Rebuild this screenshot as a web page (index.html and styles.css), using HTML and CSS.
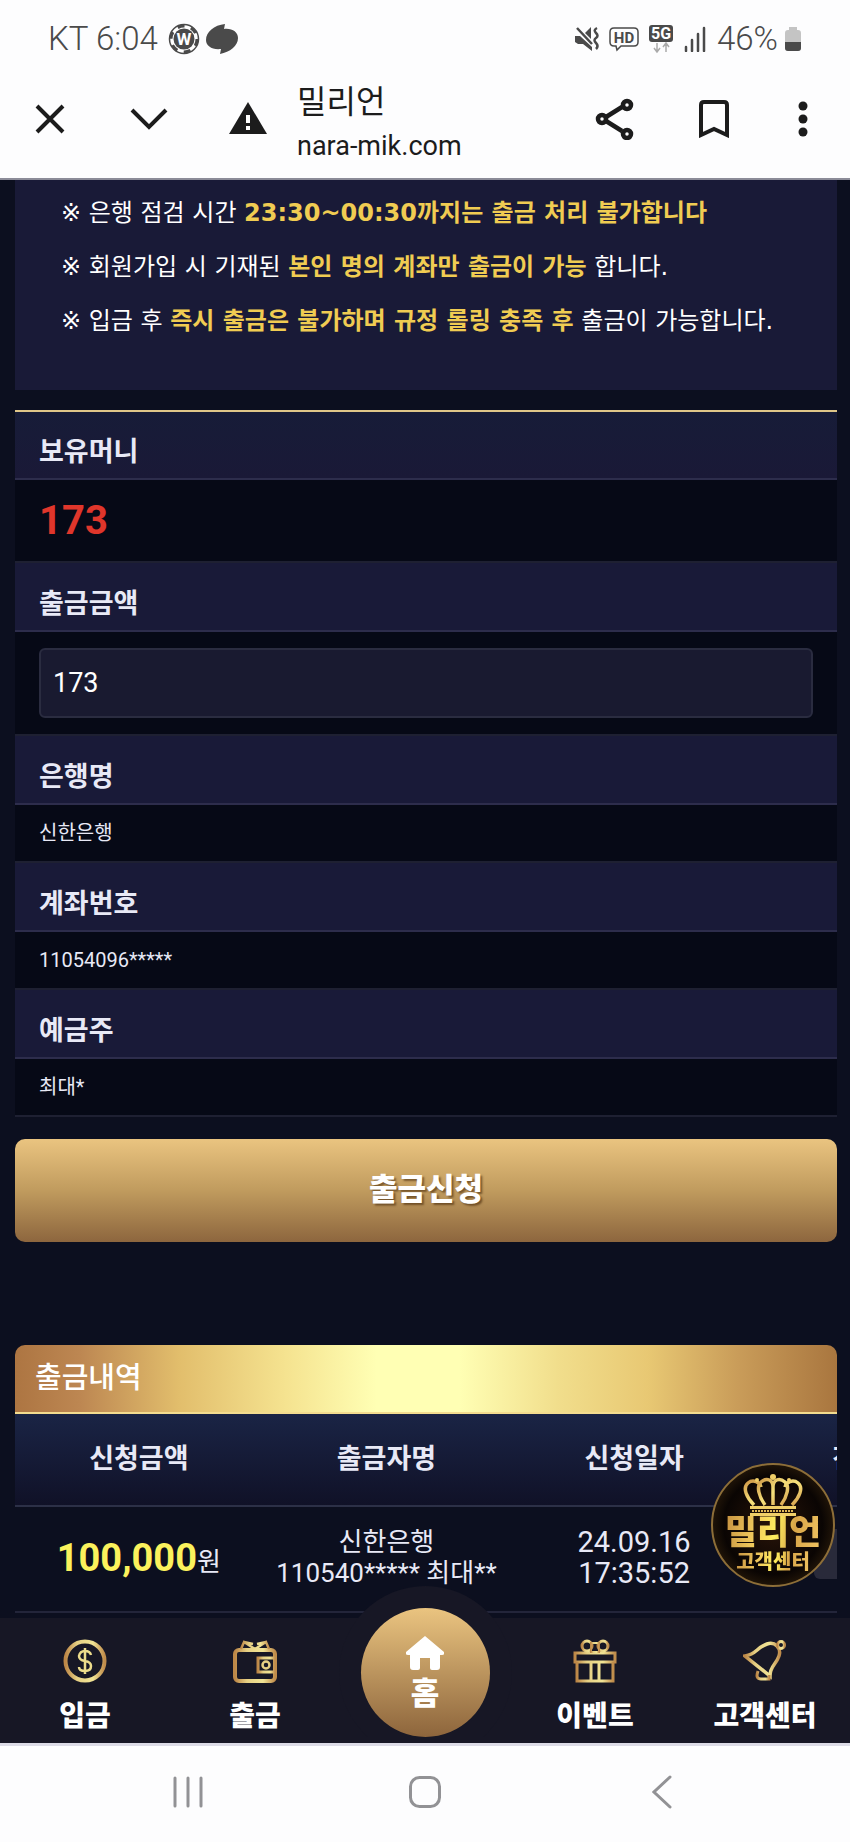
FILE: index.html
```html
<!DOCTYPE html>
<html lang="ko">
<head>
<meta charset="utf-8">
<meta name="viewport" content="width=device-width, initial-scale=1">
<title>밀리언</title>
<link rel="stylesheet" href="styles.css">
</head>
<body>
<div class="screen">
  <div class="status">
    <div class="status-left">
      <span>KT 6:04</span>
      <svg width="32" height="32" viewBox="0 0 32 32" aria-hidden="true">
        <circle cx="16" cy="16" r="14.500" fill="#fff" stroke="#4a4a4a" stroke-width="1.500"/>
        <circle cx="16" cy="16" r="13" fill="none" stroke="#4a4a4a" stroke-width="3" stroke-dasharray="7 6.610"/>
        <circle cx="16" cy="16" r="10.500" fill="#4a4a4a"/>
        <text x="16" y="22" class="coin-letter">W</text>
      </svg>
      <svg width="32" height="32" viewBox="0 0 32 32" aria-hidden="true"><path d="M19 1 18 6C26 5 32 9 32 15c0 8-8 14-18 16l1-5C6 27 0 23 0 17 0 9 8 2 19 1z" fill="#4a4a4a"/></svg>
    </div>
    <div class="status-right">
      <svg width="24" height="26" viewBox="0 0 24 26" aria-hidden="true"><g fill="#4a4a4a"><path d="M0 10h5l12 11v4L8 18H3L0 16z"/><path d="M10 7l6-6v12z"/></g><path d="M2 2l15 16M22 2q-4 2-1 5t0 5 0 5 0 6" fill="none" stroke="#4a4a4a" stroke-width="2.500"/></svg>
      <svg width="30" height="26" viewBox="0 0 30 26" aria-hidden="true"><path d="M5 2h20q4 0 4 4v10q0 4-4 4H12l-4 4-1-4H5q-4 0-4-4V6q0-4 4-4z" fill="none" stroke="#4a4a4a" stroke-width="1.500"/><text x="15" y="17" class="hd">HD</text></svg>
      <svg width="24" height="30" viewBox="0 0 24 30" aria-hidden="true"><rect width="24" height="17" y="1" rx="3" fill="#4a4a4a"/><text x="12" y="15" class="five-g">5G</text><path d="M8 19v8m-3-3 3 4 3-4M17 28v-8m-3 3 3-4 3 4" fill="none" stroke="#aaa" stroke-width="1.500"/></svg>
      <svg width="24" height="26" viewBox="0 0 24 26" aria-hidden="true"><path d="M3 21v4M9 14v11M15 8v17M21 2v23" stroke="#4a4a4a" stroke-width="2.500" stroke-linecap="round"/></svg>
      <div class="battery">
        <span>46%</span>
        <svg width="18" height="26" viewBox="0 0 18 26" aria-hidden="true"><path d="M5 1h8v3h1q3 0 3 3v15q0 3-3 3H4q-3 0-3-3V7q0-3 3-3h1z" fill="#c4c4c4"/><path d="M1 16h16v6q0 3-3 3H4q-3 0-3-3z" fill="#4a4a4a"/></svg>
      </div>
    </div>
  </div>

  <header class="toolbar">
    <button class="tool" aria-label="닫기"><svg width="30" height="30" viewBox="0 0 30 30"><path d="M2 2l26 26M28 2 2 28" stroke="#1c1c1c" stroke-width="4"/></svg></button>
    <button class="tool" aria-label="접기"><svg width="38" height="24" viewBox="0 0 38 24"><path d="M2 3l17 17L36 3" fill="none" stroke="#1c1c1c" stroke-width="4"/></svg></button>
    <button class="tool" aria-label="사이트 정보"><svg width="38" height="34" viewBox="0 0 38 34"><path d="M19 0 38 32H0z" fill="#1c1c1c"/><path d="M17 13h4v8h-4zM17 24h4v4h-4z" fill="#fff"/></svg></button>
    <div class="site">
      <div class="site-name">밀리언</div>
      <div class="site-url">nara-mik.com</div>
    </div>
    <button class="tool" aria-label="공유"><svg width="40" height="42" viewBox="0 0 40 42"><g fill="none" stroke="#1c1c1c" stroke-width="4.500"><path d="M11 19 27 9M11 23l16 10"/><circle cx="7" cy="21" r="4"/><circle cx="32" cy="7" r="4"/><circle cx="32" cy="36" r="4"/></g></svg></button>
    <button class="tool" aria-label="북마크"><svg width="30" height="38" viewBox="0 0 30 38"><path d="M2 35V5q0-3 3-3h20q3 0 3 3v30L15 29z" fill="none" stroke="#1c1c1c" stroke-width="4"/></svg></button>
    <button class="tool tool-narrow" aria-label="더보기"><svg width="10" height="36" viewBox="0 0 10 36"><g fill="#1c1c1c"><circle cx="5" cy="5" r="4.500"/><circle cx="5" cy="18" r="4.500"/><circle cx="5" cy="31" r="4.500"/></g></svg></button>
  </header>

  <main class="page">
    <section class="notice">
      <p>※ 은행 점검 시간 <b>23:30~00:30까지는 출금 처리 불가합니다</b></p>
      <p>※ 회원가입 시 기재된 <b>본인 명의 계좌만 출금이 가능</b> 합니다.</p>
      <p>※ 입금 후 <b>즉시 출금은 불가하며 규정 롤링 충족 후</b> 출금이 가능합니다.</p>
    </section>

    <form class="withdraw">
      <dl class="fields">
        <dt>보유머니</dt>
        <dd class="balance">173</dd>
        <dt><label for="amount">출금금액</label></dt>
        <dd class="entry"><input id="amount" type="text" value="173"></dd>
        <dt>은행명</dt>
        <dd>신한은행</dd>
        <dt>계좌번호</dt>
        <dd>11054096*****</dd>
        <dt>예금주</dt>
        <dd>최대*</dd>
      </dl>
      <button class="submit" type="button">출금신청</button>
    </form>

    <section class="history">
      <h2>출금내역</h2>
      <table>
        <thead><tr><th>신청금액</th><th>출금자명</th><th>신청일자</th><th>진행상태</th></tr></thead>
        <tbody><tr>
          <td class="paid"><span class="sum">100,000</span><span class="won">원</span></td>
          <td>신한은행<br>110540***** 최대**</td>
          <td class="date">24.09.16<br>17:35:52</td>
          <td><span class="state"></span></td>
        </tr></tbody>
      </table>
    </section>

    <a class="support" href="#support">
      <svg width="60" height="42" viewBox="0 0 60 42" aria-hidden="true">
        <defs><linearGradient id="gold" x1="0" y1="0" x2="1" y2="1"><stop offset="0" stop-color="#d09a48"/><stop offset=".5" stop-color="#f7e27c"/><stop offset="1" stop-color="#d6a04c"/></linearGradient></defs>
        <g fill="none" stroke="url(#gold)" stroke-width="3.500"><path d="M11 31C4 24-1 14 5 9c5-4 12-1 13 4M49 31c7-7 12-17 6-22-5-4-12-1-13 4"/><path d="M22 31c-6-8-9-19-4-23 6-5 12-2 12 5 0-7 6-10 12-5 5 4 2 15-4 23M30 8v23"/></g>
        <g fill="#f0cf68"><circle cx="30" cy="3" r="3"/><circle cx="14" cy="6" r="2"/><circle cx="46" cy="6" r="2"/><path d="M7 32h46v3H7zM7 39h46v3H7z"/></g>
        <path d="M9 37h42" stroke="#e0b856" stroke-width="2" stroke-dasharray="2 1"/>
      </svg>
      <span class="support-name">밀리언</span>
      <span class="support-label">고객센터</span>
    </a>
  </main>

  <nav class="tabs">
    <a class="tab" href="#deposit">
      <svg width="44" height="44" viewBox="0 0 44 44" aria-hidden="true">
        <defs><linearGradient id="line" x1="0" y1="0" x2="1" y2="0"><stop offset="0" stop-color="#bd8747"/><stop offset=".3" stop-color="#e6d084"/><stop offset=".7" stop-color="#f1e495"/><stop offset="1" stop-color="#c08c4b"/></linearGradient></defs>
        <circle cx="22" cy="22" r="19.500" fill="none" stroke="url(#line)" stroke-width="4"/>
        <path d="M28 16q-1-4-6-4t-6 5q0 4 6 5t6 5q0 5-6 5t-6-4M22 9v26" fill="none" stroke="#ecdc8c" stroke-width="2.500"/>
      </svg>
      <span>입금</span>
    </a>
    <a class="tab" href="#withdraw">
      <svg width="44" height="44" viewBox="0 0 44 44" aria-hidden="true"><g fill="none" stroke="url(#line)" stroke-width="3"><rect x="2" y="11" width="40" height="31" rx="4" stroke-width="4"/><path d="M8 10l3-7 11 7 11-7 3 7M11 3l9 2M33 3l-9 2" stroke-width="2.500"/><path d="M42 19H25v14h17"/><circle cx="33" cy="26" r="3.500" stroke="#e6d084" stroke-width="2.500"/></g></svg>
      <span>출금</span>
    </a>
    <a class="tab tab-home" href="#home">
      <span class="home-disc">
        <svg width="38" height="34" viewBox="0 0 38 34" aria-hidden="true"><path d="M19 0 38 16q1 3-2 3h-2v12q0 3-3 3h-5q-2 0-2-2V22H14v10q0 2-2 2H7q-3 0-3-3V19H2q-3 0-2-3z" fill="#fff"/></svg>
        <span>홈</span>
      </span>
    </a>
    <a class="tab" href="#event">
      <svg width="44" height="44" viewBox="0 0 44 44" aria-hidden="true"><g fill="none" stroke="url(#line)" stroke-width="3"><rect x="2" y="14" width="40" height="9"/><path d="M4 23v19h36V23M18 23v19M26 23v19"/><circle cx="14" cy="7" r="5"/><circle cx="30" cy="7" r="5"/><path d="M18 4h8v9h-8z" stroke-width="2"/></g></svg>
      <span>이벤트</span>
    </a>
    <a class="tab" href="#help">
      <svg width="44" height="44" viewBox="0 0 44 44" aria-hidden="true"><g fill="none" stroke="url(#line)" stroke-width="3.500"><path d="M2 17C14 15 13 9 24 5q6-2 10 2 4 4 2 10c-3 9-9 10-9 20z"/><circle cx="38" cy="6" r="3.500" stroke-width="3"/><path d="M15 32q-3 8 3 8h8v-4" stroke-width="3"/></g></svg>
      <span>고객센터</span>
    </a>
  </nav>

  <div class="system">
    <button aria-label="최근 앱"><svg width="32" height="32" viewBox="0 0 32 32"><path d="M3 2v28M16 2v28M29 2v28" stroke="#929295" stroke-width="3" stroke-linecap="round"/></svg></button>
    <button aria-label="홈 화면"><svg width="32" height="32" viewBox="0 0 32 32"><rect x="1.500" y="1.500" width="29" height="29" rx="9" fill="none" stroke="#929295" stroke-width="3"/></svg></button>
    <button aria-label="뒤로"><svg width="20" height="34" viewBox="0 0 20 34"><path d="M18 2 2 17l16 15" fill="none" stroke="#929295" stroke-width="3" stroke-linecap="round"/></svg></button>
  </div>
</div>
</body>
</html>
```
FILE: styles.css
```css
* { box-sizing: border-box; }

body {
  margin: 0;
  background: #fdfdfe;
  font-family: Roboto, "Noto Sans CJK KR", sans-serif;
  color: #e8e9f6;
}

button {
  padding: 0;
  border: 0;
  background: none;
  font-family: inherit;
  cursor: pointer;
}

a { color: inherit; text-decoration: none; }
svg { display: block; flex: none; }

.screen {
  display: flex;
  flex-direction: column;
  min-height: 100vh;
}

/* phone status bar */
.status {
  display: flex;
  justify-content: space-between;
  align-items: center;
  height: 60px;
  padding: 18px 48px 0 48px;
  font-size: 33px;
  font-weight: 300;
  line-height: 42px;
  color: #4a4a4a;
}
.status-left { display: flex; align-items: center; gap: 6px; }
.status-left span { margin-right: 4px; }
.status-right { display: flex; align-items: center; gap: 10px; }
.battery { display: flex; align-items: center; gap: 6px; }
.coin-letter { font: 700 17px Roboto, sans-serif; fill: #fff; text-anchor: middle; }
.hd { font: 700 15px Roboto, sans-serif; fill: #4a4a4a; text-anchor: middle; }
.five-g { font: 700 16px Roboto, sans-serif; fill: #fff; text-anchor: middle; }

/* browser toolbar */
.toolbar {
  display: flex;
  align-items: center;
  height: 120px;
  padding-right: 8px;
  border-bottom: 2px solid #8b8b98;
  color: #1c1c1c;
}
.tool {
  display: flex;
  justify-content: center;
  align-items: center;
  width: 99px;
  height: 99px;
}
.tool-narrow { width: 79px; }
.site { flex: 1; min-width: 0; padding-top: 9px; }
.site-name { font-size: 32px; line-height: 44px; }
.site-url { font-size: 27px; line-height: 44px; }

/* page */
.page {
  position: relative;
  flex: 1;
  padding: 0 13px 5px 15px;
  overflow: hidden;
  background: #0c0f1f;
}
.notice {
  padding: 6px 46px 42px;
  background: #191a37;
  font-family: "DejaVu Sans", "Noto Sans CJK KR", sans-serif;
  font-size: 24px;
  line-height: 54px;
  color: #fff;
}
.notice p { margin: 0; }
.notice b { color: #f0cc52; }

.fields {
  margin: 20px 0 0;
  border-top: 2px solid #dfc688;
}
.fields dt {
  padding: 16px 24px 0;
  border-bottom: 2px solid #2d2d4c;
  background: #191a38;
  font-size: 27px;
  font-weight: 700;
  line-height: 51px;
}
.fields dt:first-child {
  padding-top: 15px;
  background: linear-gradient(#171c38, #1a1937);
}
.fields dd {
  margin: 0;
  padding: 0 24px;
  border-bottom: 2px solid #1e2032;
  background: #060916;
  font-size: 20px;
  line-height: 56px;
}
.fields .balance {
  font-size: 40px;
  font-weight: 700;
  line-height: 81px;
  color: #e0362b;
}
.fields .entry { padding: 16px 24px; }
.entry input {
  display: block;
  width: 100%;
  height: 70px;
  padding: 0 12px;
  border: 2px solid #2a2c40;
  border-radius: 6px;
  background: #191a30;
  font-family: Roboto, sans-serif;
  font-size: 27px;
  color: #fff;
}

.submit {
  display: block;
  width: 100%;
  height: 103px;
  margin-top: 22px;
  padding-bottom: 8px;
  border-radius: 10px;
  background: linear-gradient(#eac480, #c09b5e 50%, #8d663e);
  font-size: 31px;
  font-weight: 900;
  color: #fff;
  text-shadow: 2px 2px 2px rgba(70, 40, 10, .6);
}

.history { margin-top: 103px; overflow: hidden; }
.history h2 {
  margin: 0;
  padding: 0 20px;
  border-bottom: 2px solid #f3dc8f;
  border-radius: 10px 10px 0 0;
  background: linear-gradient(90deg, #ad7542, #bd8752 8%, #e2be6c 20%, #f5e390 33%, #ffffb4 44%, #ffffb4 54%, #f1de8c 66%, #e8c873 77%, #c99c59 88%, #a9763f);
  font-size: 29px;
  font-weight: 500;
  line-height: 67px;
  color: #fff;
}
.history table {
  width: 120.5%;
  table-layout: fixed;
  border-collapse: collapse;
}
.history th {
  height: 92px;
  padding: 0 0 6px;
  border-bottom: 2px solid #2c3047;
  font-size: 27px;
  font-weight: 700;
}
.history thead { background: linear-gradient(#1a2445, #101127); }
.history td {
  height: 106px;
  padding: 0 0 3px;
  border-bottom: 2px solid #23253a;
  font-size: 26px;
  line-height: 31px;
  text-align: center;
}
.history .paid { padding: 3px 0 0; }
.history .date { font-size: 29px; }
.history .sum { font-size: 38px; font-weight: 700; color: #fbf25c; }
.state {
  display: inline-block;
  width: 136px;
  height: 50px;
  border-radius: 6px;
  background: #292a3a;
}

/* floating help badge */
.support {
  position: absolute;
  right: 15px;
  bottom: 31px;
  display: flex;
  flex-direction: column;
  align-items: center;
  width: 124px;
  height: 124px;
  padding-top: 9px;
  border: 2px solid #8d6e38;
  border-radius: 50%;
  background: radial-gradient(circle, #2a1509 0, #0a0503 58%, #4b3312 100%);
  color: #eec55a;
  font-weight: 900;
}
.support span {
  background: linear-gradient(100deg, #c4903f, #f0c75c 30%, #ffee5e 52%, #d9a548 70%, #f0c462);
  background-clip: text;
  color: transparent;
}
.support-name { font-size: 35px; line-height: 34px; }
.support-label { font-size: 20px; line-height: 24px; }

/* site tabs */
.tabs {
  position: relative;
  display: grid;
  grid-template-columns: repeat(5, 1fr);
  height: 125px;
  background: #171725;
  color: #fff;
  font-size: 28px;
  font-weight: 900;
  line-height: 40px;
}
.tab {
  display: flex;
  flex-direction: column;
  align-items: center;
  gap: 14px;
  padding-top: 21px;
}
.tab-home { padding: 0; margin-top: -10px; }
.home-disc {
  display: flex;
  flex-direction: column;
  align-items: center;
  gap: 4px;
  width: 129px;
  height: 129px;
  padding-top: 28px;
  border-radius: 50%;
  background: linear-gradient(#eac480, #8d653c);
  box-shadow: 0 0 0 22px #171725;
  clip-path: inset(-22px -22px 0);
  font-size: 31px;
}

/* phone navigation bar */
.system {
  display: grid;
  grid-template-columns: repeat(3, 1fr);
  height: 100px;
  padding: 0 69px;
  border-top: 3px solid #dcdbe6;
}
.system button {
  display: flex;
  justify-content: center;
  align-items: center;
  padding-bottom: 6px;
}
```
